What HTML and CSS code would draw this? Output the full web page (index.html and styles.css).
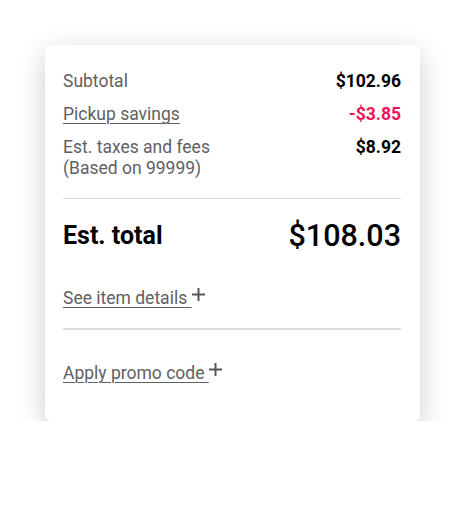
FILE: index.html
```html
<!DOCTYPE html>
<html>
<head>
<meta charset="utf-8">
<link rel="stylesheet" href="styles.css">
</head>
<body>
<div class="card">
  <div class="rows">
    <div class="row"><span class="label">Subtotal</span><span class="amt">$102.96</span></div>
    <div class="row"><a class="label link">Pickup savings</a><span class="amt red">-$3.85</span></div>
    <div class="row"><span class="label">Est. taxes and fees<br>(Based on 99999)</span><span class="amt">$8.92</span></div>
  </div>
  <hr class="div thin">
  <div class="row total"><span class="tl">Est. total</span><span class="ta">$108.03</span></div>
  <div class="action first"><a class="link label">See item details&nbsp;</a><svg class="plus" width="13" height="13" viewBox="0 0 13 13"><path d="M6.5 0V13M0 6.5H13" stroke="#555759" stroke-width="2"/></svg></div>
  <hr class="div thick">
  <div class="action second"><a class="link label">Apply promo code&nbsp;</a><svg class="plus" width="13" height="13" viewBox="0 0 13 13"><path d="M6.5 0V13M0 6.5H13" stroke="#555759" stroke-width="2"/></svg></div>
</div>
</body>
</html>
```
FILE: styles.css
```css
html, body { margin: 0; background: #fff; }
body { padding: 45px 50px 0 45px; font-family: Roboto, "Liberation Sans", sans-serif; }
.card {
  width: 375px;
  height: 376px;
  box-sizing: border-box;
  background: #fff;
  border-radius: 6px;
  box-shadow: 0 8px 28px rgba(0,0,0,0.2);
  padding: 26px 19px 0 18px;
}
.rows { display: flex; flex-direction: column; gap: 12px; }
.row { display: flex; justify-content: space-between; align-items: flex-start; font-size: 17.5px; line-height: 21px; }
.label { color: #5f6063; }
.link { text-decoration: underline; text-underline-offset: 3px; text-decoration-thickness: 1px; }
.amt { color: #000; font-weight: 700; }
.red { color: #f0155a; }
.div { border: 0; margin: 0; background: #dcdcdc; }
.thin { height: 1px; margin-top: 19px; }
.thick { height: 2px; margin-top: 19px; }
.total { align-items: center; margin-top: 19px; line-height: 36px; }
.tl { font-size: 25px; font-weight: 700; color: #000; }
.ta { font-size: 30.5px; font-weight: 500; color: #000; }
.action { font-size: 17.5px; line-height: 21px; }
.action.first { margin-top: 34px; }
.action.second { margin-top: 33px; }
.plus { vertical-align: 3px; }
```
